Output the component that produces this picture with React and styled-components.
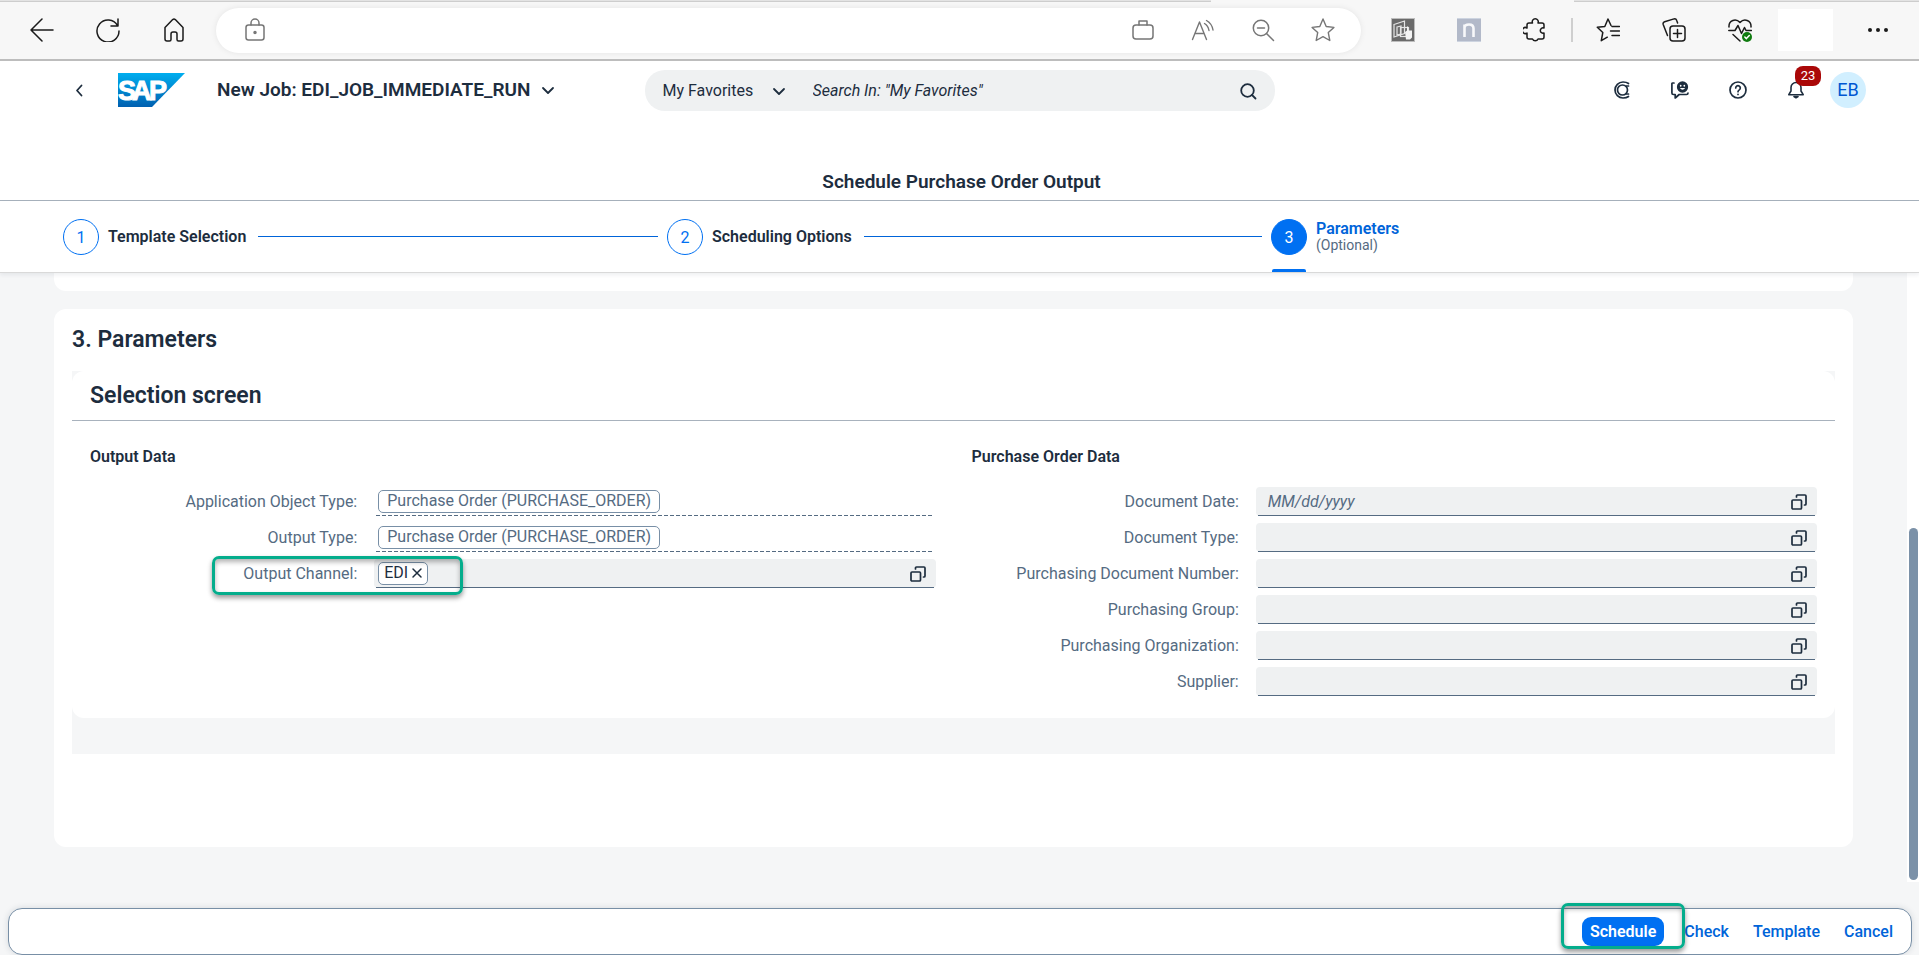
import React from "react";
import styled, { createGlobalStyle } from "styled-components";

const GlobalStyle = createGlobalStyle`
  * {
    box-sizing: border-box;
  }

  body {
    margin: 0;
    font-family: Roboto, "Noto Sans", sans-serif;
    font-size: 16px;
    line-height: 20px;
    color: #1d2d3e;
    background: #f5f6f7;
  }

  button, input, select {
    font: inherit;
    color: inherit;
    margin: 0;
    padding: 0;
    border: 0;
    background: none;
  }

  h1, h2, h3, h4 {
    margin: 0;
    font-weight: 600;
  }
`;

const Page = styled.div`
  min-height: 100vh;
  display: flex;
  flex-direction: column;
`;

const Icon = styled.svg.attrs({ "aria-hidden": true })`
  display: block;
  flex: none;
  width: ${p => p.$size || 24}px;
  height: ${p => p.$size || 24}px;
  fill: none;
  stroke: currentColor;
  stroke-width: ${p => p.$stroke || 1.5};
  stroke-linecap: round;
  stroke-linejoin: round;
`;

/* ---------- browser bar ---------- */

const TabEdge = styled.div`
  height: 2px;
  display: grid;
  grid-template-columns: 1211fr 363fr 345fr;

  span {
    background: #e3e3e3;
    border-bottom: 1px solid #cdcdcd;
  }

  span:nth-child(2) {
    background: #f7f7f7;
    border: 0;
  }
`;

const BrowserBar = styled.div`
  display: flex;
  align-items: center;
  height: 59px;
  padding: 0 24px 1px 25px;
  background: #f7f7f7;
  border-bottom: 2px solid #bdbdbd;
  color: #1b1b1b;
`;

const BarGroup = styled.div`
  display: flex;
  align-items: center;
  gap: ${p => p.$gap}px;
`;

const BarButton = styled.button`
  display: flex;
  align-items: center;
  justify-content: center;
  width: 34px;
  height: 34px;
`;

const AddressBar = styled.div`
  flex: 1;
  display: flex;
  align-items: center;
  height: 45px;
  margin: 0 25px;
  padding: 0 21px 0 22px;
  border-radius: 23px;
  background: #fff;
  box-shadow: 0 0 6px rgba(0, 0, 0, 0.08);
  color: #767676;

  input {
    flex: 1;
    min-width: 0;
    outline: none;
  }
`;

const BarDivider = styled.span`
  width: 2px;
  height: 24px;
  margin: 0 18px 0 19px;
  background: #cfcfcf;
`;

const ProfileBlank = styled.div`
  width: 55px;
  height: 42px;
  margin: 0 28px 0 21px;
  background: #fff;
`;

/* ---------- shell header ---------- */

const Shell = styled.header`
  position: relative;
  display: flex;
  align-items: center;
  height: 58px;
  padding: 0 53px 0 67px;
  background: #fff;
`;

const ShellButton = styled.button`
  position: relative;
  display: flex;
  align-items: center;
  justify-content: center;
  width: 24px;
  height: 36px;
`;

const Logo = styled.svg`
  display: block;
  flex: none;
  width: 67px;
  height: 34px;
  margin: 0 32px 0 27px;
`;

const AppTitle = styled.button`
  display: flex;
  align-items: center;
  gap: 10px;
  font-size: 19px;
  font-weight: 600;
  line-height: 24px;
  white-space: nowrap;
`;

const SearchBox = styled.form`
  position: absolute;
  left: 50%;
  top: 9px;
  width: 630px;
  height: 41px;
  margin-left: -315px;
  display: flex;
  align-items: center;
  padding: 0 15px 0 18px;
  border-radius: 20px;
  background: #eff1f2;

  select {
    appearance: none;
    width: 108px;
    outline: none;
  }

  input {
    flex: 1;
    margin-left: 26px;
    font-style: italic;
    outline: none;
  }

  input::placeholder {
    color: #1d2d3e;
    opacity: 1;
  }
`;

const ShellActions = styled.div`
  display: flex;
  align-items: center;
  gap: 34px;
  margin-left: auto;
`;

const Badge = styled.span`
  position: absolute;
  left: 11px;
  top: -6px;
  width: 26px;
  height: 20px;
  border-radius: 8px;
  background: #aa0808;
  color: #fff;
  font-size: 13px;
  line-height: 20px;
  text-align: center;
`;

const Avatar = styled.button`
  width: 36px;
  height: 36px;
  margin-left: -12px;
  border-radius: 50%;
  background: #d1efff;
  color: #0057d2;
  font-size: 18px;
`;

const PageTitle = styled.h1`
  padding: 51px 0 6px 4px;
  border-bottom: 1px solid #a8b2bd;
  background: #fff;
  font-size: 19px;
  line-height: 24px;
  text-align: center;
`;

/* ---------- wizard ---------- */

const Steps = styled.nav`
  display: grid;
  grid-template-columns: repeat(3, 1fr);
  height: 72px;
  padding: 0 44px 0 63px;
  background: #fff;
  border-bottom: 1px solid #d9d9d9;
  box-shadow: 0 2px 4px rgba(34, 53, 72, 0.08);
  position: relative;
`;

const Step = styled.div`
  display: flex;
  align-items: center;
  padding-right: 9px;

  &:not(:last-child)::after {
    content: "";
    flex: 1;
    height: 1px;
    margin-left: 12px;
    background: #0064d9;
  }
`;

const StepButton = styled.button`
  display: flex;
  align-items: center;
  gap: 9px;
  height: 71px;
  position: relative;
  text-align: left;
  white-space: nowrap;
  color: ${p => (p.$active ? "#0064d9" : "#1d2d3e")};

  &::after {
    content: "";
    display: ${p => (p.$active ? "block" : "none")};
    position: absolute;
    left: 1px;
    bottom: 0;
    width: 34px;
    height: 3px;
    border-radius: 2px 2px 0 0;
    background: #0070f2;
  }
`;

const StepNumber = styled.span`
  width: 36px;
  height: 36px;
  border: 1px solid #0070f2;
  border-radius: 50%;
  background: ${p => (p.$active ? "#0070f2" : "#fff")};
  color: ${p => (p.$active ? "#fff" : "#0070f2")};
  line-height: 35px;
  text-align: center;
`;

const StepLabel = styled.span`
  display: flex;
  flex-direction: column;
  line-height: 16px;

  strong {
    font-weight: 600;
  }

  small {
    font-size: 14px;
    color: #556b82;
  }
`;

/* ---------- content ---------- */

const Content = styled.div`
  flex: 1;
  display: flex;
`;

const Main = styled.main`
  flex: 1;
  padding: 0 54px 61px;
`;

const Track = styled.div`
  width: 12px;
  margin-bottom: 26px;
  padding: 0 1px 2px 2px;
  display: flex;
  flex-direction: column;
  justify-content: flex-end;
  background: #fff;

  span {
    height: 58%;
    border-radius: 5px;
    background: #7b91a8;
  }
`;

const PreviousCard = styled.section`
  height: 18px;
  margin-bottom: 18px;
  border-radius: 0 0 12px 12px;
  background: #fff;
`;

const Card = styled.section`
  padding: 18px 18px 93px;
  border-radius: 12px;
  background: #fff;

  > h2 {
    font-size: 23px;
    line-height: 26px;
  }
`;

const PanelArea = styled.div`
  margin-top: 18px;
  padding-bottom: 36px;
  background: #f5f6f7;
`;

const Panel = styled.div`
  border-radius: 12px;
  background: #fff;

  > h3 {
    padding: 12px 18px 11px;
    border-bottom: 1px solid #a8b2bd;
    font-size: 23px;
    line-height: 26px;
  }
`;

const Columns = styled.div`
  display: grid;
  grid-template-columns: 1fr 1fr;
  gap: 36px;
  padding: 25px 18px 15px;

  h4 {
    margin-bottom: 19px;
    font-size: 16px;
    line-height: 22px;
  }
`;

const FormRow = styled.div`
  display: grid;
  grid-template-columns: 10fr 21fr;
  gap: 17px;
  height: 30px;
  margin-bottom: 6px;

  label {
    color: #556b82;
    line-height: 29px;
    text-align: right;
  }
`;

const Field = styled.div`
  position: relative;
  display: flex;
  align-items: center;
  min-width: 0;
  height: 29px;
  padding: 0 10px 0 4px;
  border-radius: 4px;
  background: ${p => (p.$readOnly ? "transparent" : "#eff1f2")};

  &::after {
    content: "";
    position: absolute;
    left: 2px;
    right: 2px;
    bottom: 0;
    height: 1px;
    background: ${p =>
      p.$readOnly
        ? "repeating-linear-gradient(90deg, #556b82 0 4px, transparent 4px 6px)"
        : "#556b82"};
  }

  input {
    flex: 1;
    min-width: 0;
    height: 27px;
    padding-left: 8px;
    outline: none;
  }

  input::placeholder {
    color: #556b82;
    font-style: italic;
    opacity: 1;
  }
`;

const Token = styled.span`
  display: flex;
  align-items: center;
  gap: 2px;
  height: 23px;
  padding: 0 ${p => (p.$readOnly ? 8 : 3)}px 1px ${p => (p.$readOnly ? 8 : 5)}px;
  border: 1px solid #788fa6;
  border-radius: 5px;
  background: #fff;
  color: ${p => (p.$readOnly ? "#556b82" : "#1d2d3e")};
  white-space: nowrap;
`;

/* green frames that call out a step */
const Callout = styled.span`
  position: absolute;
  z-index: 2;
  border: 3px solid #04ad8c;
  border-radius: 7px;
  box-shadow: 0 3px 5px rgba(0, 0, 0, 0.4), inset 0 3px 5px rgba(0, 0, 0, 0.3);
  pointer-events: none;
`;

const ChannelCallout = styled(Callout)`
  left: -162px;
  top: -3px;
  width: 251px;
  height: 39px;
`;

const ScheduleCallout = styled(Callout)`
  left: -21px;
  top: -14px;
  width: 124px;
  height: 46px;
`;

/* ---------- footer ---------- */

const Footer = styled.footer`
  display: flex;
  align-items: center;
  justify-content: flex-end;
  height: 47px;
  margin: 0 7px 0 8px;
  padding-right: 6px;
  border: 1px solid #788fa6;
  border-radius: 14px;
  background: #fff;
  box-shadow: 0 0 6px rgba(34, 53, 72, 0.15);
`;

const FooterItem = styled.div`
  position: relative;
  margin-right: 8px;
`;

const FooterButton = styled.button`
  display: block;
  height: 29px;
  padding: 0 ${p => (p.$primary ? 8 : 12)}px;
  border-radius: 9px;
  background: ${p => (p.$primary ? "#0070f2" : "transparent")};
  color: ${p => (p.$primary ? "#fff" : "#0064d9")};
  font-weight: ${p => (p.$primary ? 600 : 500)};
`;

const BackIcon = () => (
  <Icon viewBox="0 0 24 24"><path d="M23 12H1M12 1 1 12l11 11" /></Icon>
);

const ReloadIcon = () => (
  <Icon viewBox="0 0 24 24"><path d="M21.5 7.5A11 11 0 1 0 23 13M22 1v7h-7" /></Icon>
);

const HomeIcon = () => (
  <Icon viewBox="0 0 24 24">
    <path d="M3 9.500 10.700 1.600q1.300-1.200 2.600 0L21 9.500V21a2 2 0 0 1-2 2h-2.500a1.500 1.500 0 0 1-1.500-1.500V16a2 2 0 0 0-2-2h-2a2 2 0 0 0-2 2v5.500A1.500 1.500 0 0 1 7.500 23H5a2 2 0 0 1-2-2z" />
  </Icon>
);

const LockIcon = () => (
  <Icon viewBox="0 0 24 24">
    <rect x="3" y="7" width="18" height="15" rx="2.500" />
    <path d="M8 7V5a4 4 0 0 1 8 0v2" />
    <circle cx="12" cy="14.500" r="1" fill="currentColor" />
  </Icon>
);

const BriefcaseIcon = () => (
  <Icon viewBox="0 0 24 24">
    <rect x="2" y="7" width="20" height="14" rx="3" />
    <path d="M8 7V3h8v4" />
  </Icon>
);

const ReadAloudIcon = () => (
  <Icon viewBox="0 0 24 24" $stroke={1.4}>
    <path d="M1.500 21.500 8.500 4l7 17.500M4 15.500h9M13.500 5.500c2.500 1.500 4 4 4.500 7M15.500 2.500c3.500 2 5.800 5 6.500 9.500" />
  </Icon>
);

const ZoomOutIcon = () => (
  <Icon viewBox="0 0 24 24">
    <circle cx="10" cy="10" r="7.700" />
    <path d="M6.500 10h7M15.500 15.500l7 7" />
  </Icon>
);

const StarIcon = () => (
  <Icon viewBox="0 0 24 24" $stroke={1.4}>
    <path d="m12 1 3.200 7.500 7.700.9-5.600 5.200 1.500 7.900-6.800-3.800-6.800 3.800 1.500-7.900L1.100 9.400l7.700-.9z" />
  </Icon>
);

const WindowsExtIcon = () => (
  <svg width="24" height="24" viewBox="0 0 24 24" aria-hidden="true">
    <rect width="24" height="24" fill="#bdbdbd" />
    <rect x="1" y="1" width="22" height="22" fill="#6b6b6b" />
    <g fill="none" stroke="#e6e6e6" strokeWidth="1.200">
      <path d="M3 6.500 13.500 3v12.500L3 19z" />
      <rect x="9.500" y="9.500" width="8" height="9" />
      <path d="M6 9l4-1v8l-4 1z" />
    </g>
    <path d="M14 14l2-1.500v-4h1v4h4v7l-2 2h-4z" fill="#f5f5f5" />
  </svg>
);

const NoteExtIcon = () => (
  <svg width="24" height="24" viewBox="0 0 24 24" aria-hidden="true">
    <rect width="24" height="24" fill="#cdd4e0" />
    <rect y="1" width="24" height="22" fill="#b2b9c9" />
    <path d="M7.500 19V6.500M7.500 10q0-3.500 4.500-3.500t4.500 4V19" fill="none" stroke="#f7f8fa" strokeWidth="2.600" />
  </svg>
);

const PuzzleIcon = () => (
  <Icon viewBox="0 0 24 24">
    <path d="M4 7a2 2 0 0 1 2-2h3.500a3 3 0 1 1 5.500 0H19a2 2 0 0 1 2 2v3a2.700 2.700 0 1 0 0 5v4a2 2 0 0 1-2 2h-4a3 3 0 0 1-5.500 0H6a2 2 0 0 1-2-2v-4a3 3 0 1 1 0-5z" />
  </Icon>
);

const FavoritesIcon = () => (
  <Icon viewBox="0 0 24 24">
    <path d="M15 7.500 12 1 8.800 8.500l-7.500.8 5.500 5.200-1.500 8.200 6-3.500M16 8.500h7.500M14.500 13h9M16 17.500h7.500" />
  </Icon>
);

const CollectionsIcon = () => (
  <Icon viewBox="0 0 24 24">
    <rect x="8" y="8" width="15" height="15" rx="3" />
    <path d="M15.500 11.500v8M11.500 15.500h8M5.500 17.500 1.200 6.500Q.6 4.500 2.600 3.800L12 .9q2-.5 2.600 1.400l1 2.700" />
  </Icon>
);

const HealthIcon = () => (
  <Icon viewBox="0 0 24 24">
    <path d="M1 9C.5 2 8 0 12 4.500 16 0 23.500 2 23 9M.8 12.500H7l3-5 3.500 8 3-6 1.500 3h5.500M5 16.500l7 6.500" />
    <circle cx="19" cy="19" r="5" fill="#107c10" stroke="none" />
    <path d="m16.800 19 1.600 1.600 2.900-3" stroke="#fff" />
  </Icon>
);

const MoreIcon = () => (
  <Icon viewBox="0 0 24 24">
    <g fill="currentColor" stroke="none">
      <circle cx="4" cy="12" r="2" />
      <circle cx="12" cy="12" r="2" />
      <circle cx="20" cy="12" r="2" />
    </g>
  </Icon>
);

const ChevronDown = () => (
  <Icon viewBox="0 0 16 16" $size={16} $stroke={1.8}><path d="m3 6 5 5 5-5" /></Icon>
);

const ValueHelpIcon = () => (
  <Icon viewBox="0 0 16 16" $size={16} $stroke={1.7}>
    <rect x="1" y="6" width="9.500" height="9" rx="1" />
    <path d="M5.500 3V2q0-1 1-1H14q1 0 1 1v8q0 1-1 1h-.5" />
  </Icon>
);

const SapLogo = () => (
  <Logo viewBox="0 0 67 34" role="img" aria-label="SAP">
    <defs>
      <linearGradient id="sapBlue" x1="0" y1="0" x2="0" y2="1">
        <stop offset="0" stopColor="#00aeef" />
        <stop offset="1" stopColor="#0060b0" />
      </linearGradient>
    </defs>
    <path d="M0 0h67L34 34H0z" fill="url(#sapBlue)" />
    <text x="0 14 31" y="27" fill="#fff" stroke="#fff" strokeWidth="1" fontFamily="Liberation Sans, sans-serif" fontWeight="700" fontSize="27">
      SAP
    </text>
  </Logo>
);

const orderFields = [
  { id: "docDate", label: "Document Date:", placeholder: "MM/dd/yyyy" },
  { id: "docType", label: "Document Type:" },
  { id: "docNumber", label: "Purchasing Document Number:" },
  { id: "purchGroup", label: "Purchasing Group:" },
  { id: "purchOrg", label: "Purchasing Organization:" },
  { id: "supplier", label: "Supplier:" }
];

const outputFields = [
  { id: "objectType", label: "Application Object Type:" },
  { id: "outputType", label: "Output Type:" }
];

function App() {
  return (
    <Page>
      <GlobalStyle />
      <TabEdge><span /><span /><span /></TabEdge>
      <BrowserBar>
        <BarGroup $gap={32}>
          <BarButton aria-label="Back"><BackIcon /></BarButton>
          <BarButton aria-label="Reload"><ReloadIcon /></BarButton>
          <BarButton aria-label="Home"><HomeIcon /></BarButton>
        </BarGroup>
        <AddressBar>
          <BarButton aria-label="Site information"><LockIcon /></BarButton>
          <input type="text" aria-label="Address" />
          <BarGroup $gap={26}>
            <BarButton aria-label="Work"><BriefcaseIcon /></BarButton>
            <BarButton aria-label="Read aloud"><ReadAloudIcon /></BarButton>
            <BarButton aria-label="Zoom out"><ZoomOutIcon /></BarButton>
            <BarButton aria-label="Favorite"><StarIcon /></BarButton>
          </BarGroup>
        </AddressBar>
        <BarGroup $gap={32}>
          <BarButton aria-label="Windows"><WindowsExtIcon /></BarButton>
          <BarButton aria-label="Notes"><NoteExtIcon /></BarButton>
          <BarButton aria-label="Extensions"><PuzzleIcon /></BarButton>
        </BarGroup>
        <BarDivider />
        <BarGroup $gap={32}>
          <BarButton aria-label="Favorites"><FavoritesIcon /></BarButton>
          <BarButton aria-label="Collections"><CollectionsIcon /></BarButton>
          <BarButton aria-label="Browser essentials"><HealthIcon /></BarButton>
        </BarGroup>
        <ProfileBlank />
        <BarButton aria-label="Settings"><MoreIcon /></BarButton>
      </BrowserBar>

      <Shell>
        <ShellButton aria-label="Back">
          <Icon viewBox="0 0 16 16" $size={16} $stroke={1.8}><path d="M10.500 3.500 6 8.500l4.500 5" /></Icon>
        </ShellButton>
        <SapLogo />
        <AppTitle>
          New Job: EDI_JOB_IMMEDIATE_RUN
          <ChevronDown />
        </AppTitle>
        <SearchBox>
          <select aria-label="Search scope">
            <option>My Favorites</option>
          </select>
          <ChevronDown />
          <input type="text" aria-label="Search" placeholder={'Search In: "My Favorites"'} />
          <ShellButton type="button" aria-label="Start search">
            <Icon viewBox="0 0 18 18" $size={18} $stroke={1.8}>
              <circle cx="8.500" cy="8.500" r="6.300" />
              <path d="m13 13 3.500 3.500" />
            </Icon>
          </ShellButton>
        </SearchBox>
        <ShellActions>
          <ShellButton aria-label="Copilot">
            <Icon viewBox="0 0 18 18" $size={18} $stroke={1.7}>
              <path d="M15.500 2.500Q13.500 1 10 1a8 8 0 0 0 0 16q3.500 0 5.500-1.500" />
              <circle cx="9.500" cy="9" r="5" />
              <path d="M13.500 5h2M13.500 13h2" />
            </Icon>
          </ShellButton>
          <ShellButton aria-label="Feedback">
            <Icon viewBox="0 0 18 18" $size={18} $stroke={1.7}>
              <path d="M3 2H1.500Q.9 2 .9 3v9q0 1.500 1.500 1.500h1.800V17l4-3.500h7.300q1.500 0 1.500-1.500" />
              <circle cx="11.500" cy="6" r="4.800" fill="currentColor" />
              <path d="M8.800 7q2.700 3.600 5.400 0z" fill="#fff" stroke="none" />
              <path d="M9.700 4.600v.2M13.300 4.600v.2" stroke="#fff" />
            </Icon>
          </ShellButton>
          <ShellButton aria-label="Help">
            <Icon viewBox="0 0 18 18" $size={18} $stroke={1.7}>
              <circle cx="9" cy="9" r="8" />
              <path d="M6.700 7a2.300 2.300 0 1 1 3.600 1.900Q9 9.700 9 10.700M9 13.300v.1" />
            </Icon>
          </ShellButton>
          <ShellButton aria-label="Notifications, 23 new">
            <Icon viewBox="0 0 18 18" $size={18} $stroke={1.6}>
              <path d="M9 1.500a5 5 0 0 0-5 5V10l-2.200 3.700h14.400L14 10V6.500a5 5 0 0 0-5-5z" />
              <path d="M7 15.500h4l-2 1.300z" fill="currentColor" />
            </Icon>
            <Badge>23</Badge>
          </ShellButton>
          <Avatar aria-label="User profile">EB</Avatar>
        </ShellActions>
      </Shell>

      <PageTitle>Schedule Purchase Order Output</PageTitle>

      <Steps aria-label="Progress">
        <Step>
          <StepButton>
            <StepNumber>1</StepNumber>
            <StepLabel><strong>Template Selection</strong></StepLabel>
          </StepButton>
        </Step>
        <Step>
          <StepButton>
            <StepNumber>2</StepNumber>
            <StepLabel><strong>Scheduling Options</strong></StepLabel>
          </StepButton>
        </Step>
        <Step>
          <StepButton $active>
            <StepNumber $active>3</StepNumber>
            <StepLabel>
              <strong>Parameters</strong>
              <small>(Optional)</small>
            </StepLabel>
          </StepButton>
        </Step>
      </Steps>

      <Content>
        <Main>
          <PreviousCard />
          <Card>
            <h2>3. Parameters</h2>
            <PanelArea>
              <Panel>
                <h3>Selection screen</h3>
                <Columns>
                  <section>
                    <h4>Output Data</h4>
                    {outputFields.map(field => (
                      <FormRow key={field.id}>
                        <label id={field.id}>{field.label}</label>
                        <Field $readOnly role="group" aria-labelledby={field.id}>
                          <Token $readOnly>Purchase Order (PURCHASE_ORDER)</Token>
                        </Field>
                      </FormRow>
                    ))}
                    <FormRow>
                      <label htmlFor="channel">Output Channel:</label>
                      <Field>
                        <Token>
                          EDI
                          <button aria-label="Remove EDI">
                            <Icon viewBox="0 0 14 14" $size={14} $stroke={1.5}>
                              <path d="m3 3 8 8M11 3l-8 8" />
                            </Icon>
                          </button>
                        </Token>
                        <input id="channel" type="text" />
                        <button aria-label="Value help"><ValueHelpIcon /></button>
                        <ChannelCallout />
                      </Field>
                    </FormRow>
                  </section>
                  <section>
                    <h4>Purchase Order Data</h4>
                    {orderFields.map(field => (
                      <FormRow key={field.id}>
                        <label htmlFor={field.id}>{field.label}</label>
                        <Field>
                          <input id={field.id} type="text" placeholder={field.placeholder} />
                          <button aria-label="Value help"><ValueHelpIcon /></button>
                        </Field>
                      </FormRow>
                    ))}
                  </section>
                </Columns>
              </Panel>
            </PanelArea>
          </Card>
        </Main>
        <Track><span /></Track>
      </Content>

      <Footer>
        <FooterItem>
          <FooterButton $primary>Schedule</FooterButton>
          <ScheduleCallout />
        </FooterItem>
        <FooterButton>Check</FooterButton>
        <FooterButton>Template</FooterButton>
        <FooterButton>Cancel</FooterButton>
      </Footer>
    </Page>
  );
}

export default App;
